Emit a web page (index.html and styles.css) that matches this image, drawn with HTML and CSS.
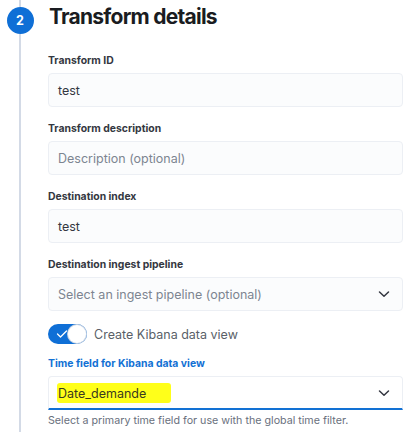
FILE: index.html
```html
<!DOCTYPE html>
<html>
<head>
<meta charset="utf-8">
<link rel="stylesheet" href="styles.css">
</head>
<body>
<div class="step">
  <div class="rail">
    <div class="rail-top"></div>
    <div class="badge">2</div>
    <div class="rail-line"></div>
  </div>
  <div class="content">
    <h2 class="title">Transform details</h2>
    <div class="field">
      <label class="label">Transform ID</label>
      <div class="input"><span class="value">test</span></div>
    </div>
    <div class="field">
      <label class="label">Transform description</label>
      <div class="input"><span class="placeholder">Description (optional)</span></div>
    </div>
    <div class="field">
      <label class="label">Destination index</label>
      <div class="input"><span class="value">test</span></div>
    </div>
    <div class="field">
      <label class="label">Destination ingest pipeline</label>
      <div class="input select"><span class="placeholder">Select an ingest pipeline (optional)</span>
        <svg class="chev" width="14" height="14" viewBox="0 0 14 14"><path d="M2.5 5 L7 9.3 L11.5 5" fill="none" stroke="#343741" stroke-width="1.5" stroke-linecap="round" stroke-linejoin="round"/></svg>
      </div>
    </div>
    <div class="switch-row">
      <div class="switch">
        <svg class="check" width="12" height="10" viewBox="0 0 12 10"><path d="M1.5 5 L4.5 8 L10.5 2" fill="none" stroke="#ffffff" stroke-width="1.3" stroke-linecap="round" stroke-linejoin="round"/></svg>
        <div class="knob"></div>
      </div>
      <span class="switch-label">Create Kibana data view</span>
    </div>
    <div class="field field-last">
      <label class="label label-focus">Time field for Kibana data view</label>
      <div class="input select focused"><span class="value hl">Date_demande</span>
        <svg class="chev" width="14" height="14" viewBox="0 0 14 14"><path d="M2.5 5 L7 9.3 L11.5 5" fill="none" stroke="#343741" stroke-width="1.5" stroke-linecap="round" stroke-linejoin="round"/></svg>
      </div>
      <div class="help">Select a primary time field for use with the global time filter.</div>
    </div>
  </div>
</div>
</body>
</html>
```
FILE: styles.css
```css
html, body {
  margin: 0;
  padding: 0;
  background: #ffffff;
}
body {
  font-family: Inter, "Noto Sans", sans-serif;
  color: #343741;
  width: 413px;
  height: 432px;
  overflow: hidden;
}
.step {
  display: flex;
  height: 432px;
}
.rail {
  width: 40px;
  flex: 0 0 40px;
  display: flex;
  flex-direction: column;
  align-items: center;
}
.rail-top {
  width: 2px;
  height: 7px;
  background: #d3dae6;
}
.badge {
  width: 27px;
  height: 27px;
  border-radius: 50%;
  background: #0f6fd6;
  color: #ffffff;
  font-size: 12.5px;
  font-weight: 700;
  display: flex;
  align-items: center;
  justify-content: center;
  flex: 0 0 auto;
}
.rail-line {
  width: 2px;
  flex: 1;
  background: #d3dae6;
}
.content {
  flex: 1;
  padding-left: 8px;
  padding-right: 10px;
}
.title {
  margin: 2px 0 0 1px;
  font-size: 21px;
  line-height: 29px;
  font-weight: 700;
  color: #1a1c21;
  letter-spacing: -0.75px;
}
.field {
  display: flex;
  flex-direction: column;
  gap: 5px;
  margin-top: 15px;
}
.title + .field {
  margin-top: 23px;
}
.label {
  font-size: 10.4px;
  line-height: 14px;
  font-weight: 700;
  color: #343741;
}
.label-focus {
  color: #1271d4;
}
.input {
  height: 34px;
  box-sizing: border-box;
  border: 1px solid #eceff4;
  border-radius: 4px;
  background: #fbfcfd;
  display: flex;
  align-items: center;
  padding: 0 10px 0 9px;
  font-size: 12.5px;
}
.select {
  justify-content: space-between;
}
.value {
  color: #343741;
}
.placeholder {
  color: #7d8591;
}
.chev {
  margin-right: 1px;
}
.focused {
  border-bottom: 2px solid #1271d4;
  background: #ffffff;
  border-radius: 4px 4px 0 0;
}
.hl {
  background: #ffff1a;
  margin-left: -1px;
  padding: 3px 25px 2px 1px;
  border-radius: 3px;
  color: #3a3a20;
}
.switch-row {
  display: flex;
  align-items: center;
  gap: 7px;
  margin-top: 13px;
  height: 20px;
}
.switch {
  width: 39px;
  height: 20px;
  border-radius: 10px;
  background: #0f6fd6;
  display: flex;
  align-items: center;
  justify-content: space-between;
  padding: 0 1px 0 8px;
  box-sizing: border-box;
}
.knob {
  width: 18px;
  height: 18px;
  border-radius: 50%;
  background: #ffffff;
  box-shadow: 0 0 0 1px #c7d3e3;
}
.switch-label {
  font-size: 12.5px;
  color: #5a5f68;
}
.field-last {
  margin-top: 13px;
}
.help {
  font-size: 10.7px;
  line-height: 14px;
  color: #69707d;
  margin-top: -1px;
}
```
